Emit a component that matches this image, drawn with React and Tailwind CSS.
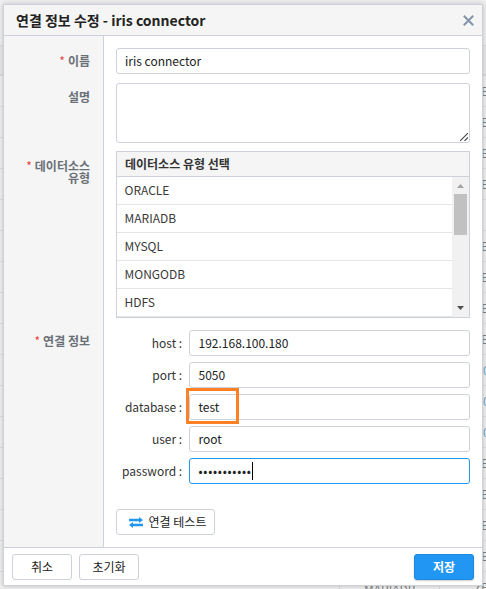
import React from "react";

const backdropRows = ["E", "E", "E", "E", "", "E", "E", "E", "E", "0", "0", "0", "E", "E", "E", "E", "E"];
const sources = ["ORACLE", "MARIADB", "MYSQL", "MONGODB", "HDFS"];
const fields = [
  { label: "host", value: "192.168.100.180" },
  { label: "port", value: "5050" },
  { label: "database", value: "test", marked: true },
  { label: "user", value: "root" },
  { label: "password", value: "•••••••••••", focused: true },
];

const box = "rounded-[3px] border border-[#cdd1d8] bg-white";

function Backdrop() {
  return (
    <div className="absolute inset-0 overflow-hidden bg-[#f0f0f0] text-[#858585]">
      <div className="h-[45px]" />
      <div className="h-[31px] border-t border-b-2 border-[#dcdcdf] bg-[#e9e9e9]" />
      {backdropRows.map((t, i) => (
        <div key={i} className={`flex h-[31px] items-center border-b border-[#dedee0] text-[12px] ${t === "0" ? "pl-[483px] text-[#6ba6cf]" : "pl-[481px]"}`}>
          {t}
        </div>
      ))}
    </div>
  );
}

function BackdropFooter() {
  return (
    <div className="absolute top-[586px] left-0 flex h-[3px] w-full overflow-hidden pl-[339px] text-[12px] leading-[12px] text-[#858585]">
      <div className="w-[100px] shrink-0 border-l border-[#dcdcdf] pl-[24px]">
        <span className="-mt-[3px] block">MARIADB</span>
      </div>
      <div className="w-[47px] shrink-0 border-l border-[#dcdcdf] pl-[36px]">
        <span className="-mt-[3px] block">C</span>
      </div>
    </div>
  );
}

function Header() {
  return (
    <header className="flex h-[31px] shrink-0 items-center justify-between border-b border-[#cdd1d8] bg-[#f5f5f5] pr-[8px] pl-[12px]">
      <h1 className="text-[14px] leading-[20px] font-bold text-[#222]">연결 정보 수정 - iris connector</h1>
      <svg className="h-[11px] w-[11px]" viewBox="0 0 11 11" fill="none" stroke="#8394a8" strokeWidth="2">
        <path d="M.8.8l9.4 9.4M10.2.8L.8 10.2" />
      </svg>
    </header>
  );
}

function Label({ required, className, children }) {
  return (
    <div className={`flex justify-end gap-[3px] text-right text-[12px] leading-[12px] font-bold text-[#6a7077] ${className}`}>
      {required && <span className="text-[12px] font-normal text-[#e8453c]">*</span>}
      <span>{children}</span>
    </div>
  );
}

function SourceTable() {
  return (
    <div className="mt-[8px] h-[167px] border border-[#cdd1d8]">
      <div className="h-[25px] border-b border-[#cdd1d8] bg-[#f5f5f5] pl-[8px] text-[12px] leading-[24px] font-bold text-[#333]">
        데이터소스 유형 선택
      </div>
      <div className="flex h-[140px]">
        <div className="flex-1">
          {sources.map((s) => (
            <div key={s} className="h-[28px] border-b border-[#e4e5e7] pl-[7.5px] leading-[25px] text-[#3a3a3a]">{s}</div>
          ))}
        </div>
        <div className="flex w-[17px] flex-col items-center bg-[#f1f1f1]">
          <svg className="h-[17px] w-[17px]" viewBox="0 0 17 17"><path d="M5 11h7L8.5 7z" fill="#a3a3a3" /></svg>
          <div className="h-[41px] w-[13px] bg-[#c1c1c1]" />
          <svg className="mt-auto h-[17px] w-[17px]" viewBox="0 0 17 17"><path d="M5 6h7L8.5 10z" fill="#505050" /></svg>
        </div>
      </div>
    </div>
  );
}

function Field({ label, value, marked, focused }) {
  return (
    <div className="flex h-[26px]">
      <div className="flex w-[73px] justify-end pr-[7px] leading-[25px]">
        <span>{label}</span>
        <span className="ml-[2.5px]">:</span>
      </div>
      <div className={`relative flex-1 rounded-[3px] border bg-white pl-[8.5px] leading-[24px] text-[#222] ${focused ? "border-[#2196f3]" : "border-[#cdd1d8]"}`}>
        {focused ? (
          <span className="flex h-[24px] items-center">
            <span className="text-[12px] tracking-[0.75px]">{value}</span>
            <span className="h-[18px] w-px bg-black" />
          </span>
        ) : value}
        {marked && <div className="absolute -top-[7px] -left-[4px] h-[36px] w-[53px] border-[3px] border-[#ff8126]" />}
      </div>
    </div>
  );
}

function Button({ className, children }) {
  return <button className={`flex h-[26px] items-center justify-center text-[12px] leading-[24px] ${className}`}>{children}</button>;
}

export default function App() {
  return (
    <main className="relative h-[589px] w-[486px] overflow-hidden font-['Noto_Sans_CJK_KR','Noto_Sans',sans-serif] text-[12px] text-[#333]">
      <Backdrop />
      <BackdropFooter />
      <section className="relative mt-[4px] ml-[3px] flex h-[582px] w-[480px] flex-col border border-[#cdd1d8] bg-white shadow-[0_0_5px_rgba(0,0,0,0.22)]">
        <Header />
        <div className="flex h-[511px] shrink-0">
          <aside className="w-[100px] shrink-0 border-r border-[#cdd1d8] bg-[#f5f5f5] pr-[13px]">
            <Label required className="mt-[19px]">이름</Label>
            <Label className="mt-[24px]">설명</Label>
            <Label required className="mt-[57px]">데이터소스<br />유형</Label>
            <Label required className="mt-[151px]">연결 정보</Label>
          </aside>
          <div className="flex w-[366px] flex-col pt-[12px] pl-[12px]">
            <div className={`h-[26px] shrink-0 pl-[8px] leading-[24px] text-[#222] ${box}`}>iris connector</div>
            <div className={`mt-[9px] flex h-[60px] shrink-0 items-end justify-end p-px ${box}`}>
              <svg className="h-[8px] w-[8px]" viewBox="0 0 8 8" stroke="#444" strokeWidth="1.1"><path d="M0 8L8 0M4.5 8L8 4.5" /></svg>
            </div>
            <SourceTable />
            <div className="mt-[12px] flex flex-col gap-[6px]">
              {fields.map((f) => <Field key={f.label} {...f} />)}
            </div>
            <Button className={`mt-[25px] w-[99px] gap-[6px] pl-[4px] text-[#222] ${box}`}>
              <svg className="h-[11px] w-[14px]" viewBox="0 0 14 11" fill="#2196f3">
                <path d="M0 1.8h10V0l4 3-4 3V4.2H0zM14 6.8H4V5L0 8l4 3V9.2h10z" />
              </svg>
              연결 테스트
            </Button>
          </div>
        </div>
        <footer className="flex flex-1 items-start gap-[7px] border-t border-[#cdd1d8] px-[8px] pt-[6px]">
          <Button className={`w-[60px] text-[#222] ${box}`}>취소</Button>
          <Button className={`w-[60px] text-[#222] ${box}`}>초기화</Button>
          <Button className="ml-auto w-[60px] rounded-[3px] border border-[#1e88e0] bg-[#2196f3] font-bold text-white shadow-[0_1px_2px_rgba(0,0,0,0.2)]">저장</Button>
        </footer>
      </section>
    </main>
  );
}
